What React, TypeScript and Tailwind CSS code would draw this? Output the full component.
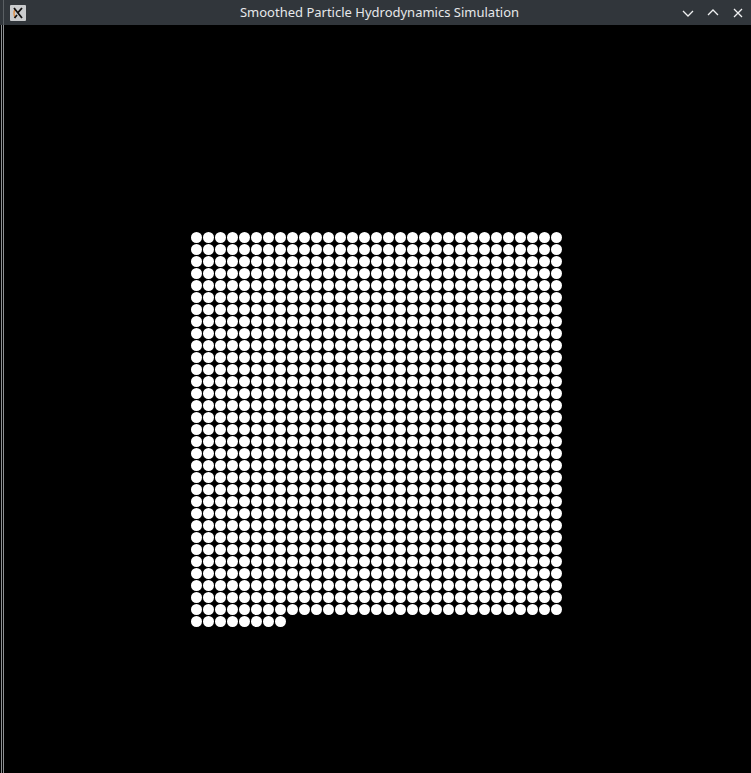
const COLS = 31
const FULL_ROWS = 32
const EXTRA = 8

const particles = Array.from({ length: COLS * FULL_ROWS + EXTRA }, (_, i) => i)

function XIcon() {
    return (
        <div className="w-[16px] h-[16px] bg-[#c9cbcd] rounded-[1px] flex items-center justify-center">
            <svg width="14" height="14" viewBox="0 0 14 14">
                <path d="M4.5 3 C2.5 5 2.5 10 4.5 12" stroke="#e08a3c" strokeWidth="1.3" fill="none" />
                <path d="M3 2 L11 12 M11 2 L6.5 7.2 M3.5 12 L6 9" stroke="#111" strokeWidth="1.8" fill="none" />
            </svg>
        </div>
    )
}

export default function App() {
    return (
        <div className="w-[751px] h-[773px] bg-black flex flex-col overflow-hidden" style={{ fontFamily: '"Noto Sans", "DejaVu Sans", sans-serif' }}>
            {/* title bar */}
            <div className="h-[25px] bg-[#31363b] flex items-center relative">
                <div className="w-[4px] h-full flex">
                    <div className="w-[3px]" />
                    <div className="w-px bg-[#5a5f63]" />
                </div>
                <div className="ml-[6px]">
                    <XIcon />
                </div>
                <div className="flex-1 text-center text-[13px] text-[#e6e8ea] pl-[51px] leading-none -mt-[1px]">
                    Smoothed Particle Hydrodynamics Simulation
                </div>
                <div className="flex items-center gap-[13px] pr-[7px]">
                    <svg width="12" height="12" viewBox="0 0 12 12">
                        <path d="M1 4 L6 9 L11 4" stroke="#eff0f1" strokeWidth="1.3" fill="none" />
                    </svg>
                    <svg width="12" height="12" viewBox="0 0 12 12">
                        <path d="M1 8 L6 3 L11 8" stroke="#eff0f1" strokeWidth="1.3" fill="none" />
                    </svg>
                    <svg width="12" height="12" viewBox="0 0 12 12">
                        <path d="M2 2 L10 10 M10 2 L2 10" stroke="#eff0f1" strokeWidth="1.3" fill="none" />
                    </svg>
                </div>
            </div>

            <div className="flex-1 flex">
                {/* window edge */}
                <div className="w-[4px] flex">
                    <div className="w-px" />
                    <div className="w-px bg-[#8c8f92]" />
                    <div className="w-px" />
                    <div className="w-px bg-[#8c8f92]" />
                </div>
                <div className="flex-1 pl-[187px] pt-[207px]">
                    <div className="grid grid-cols-[repeat(31,11px)] gap-px">
                        {particles.map((p) => (
                            <div key={p} className="w-[11px] h-[11px] rounded-full bg-white" />
                        ))}
                    </div>
                </div>
            </div>
        </div>
    )
}
